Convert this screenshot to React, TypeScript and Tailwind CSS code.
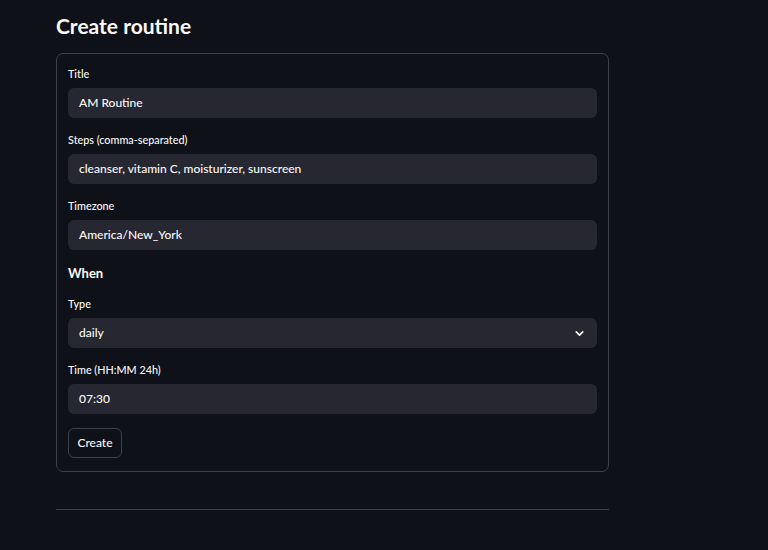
import { ChevronDown } from "lucide-react";

const font = { fontFamily: '"Source Sans Pro", Lato, "Noto Sans", sans-serif' };

function Field({ label, value, select }: { label: string; value: string; select?: boolean }) {
  return (
    <div className="flex flex-col">
      <label className="h-[16px] text-[10.8px] leading-[16px] font-medium text-[#fafafa] mb-[6px]">{label}</label>
      <div className="h-[30px] rounded-[6px] bg-[#262730] flex items-center justify-between pl-[11px] pr-[11px]">
        <span className="text-[12px] font-medium text-[#fafafa]">{value}</span>
        {select && <ChevronDown size={13} strokeWidth={3} className="text-[#fafafa]" />}
      </div>
    </div>
  );
}

export default function App() {
  return (
    <div className="min-h-[550px] h-[550px] overflow-hidden bg-[#0e1117] text-[#fafafa]" style={font}>
      <div className="w-[553px] ml-[56px] pt-[8px]">
        <h1 className="text-[21px] leading-[36px] font-bold mb-[9px]">Create routine</h1>

        <div className="border border-[#3d4045] rounded-[7px] px-[11px] pt-[12px] pb-[13px] flex flex-col gap-[14px]">
          <Field label="Title" value="AM Routine" />
          <Field label="Steps (comma-separated)" value="cleanser, vitamin C, moisturizer, sunscreen" />
          <Field label="Timezone" value="America/New_York" />
          <div className="h-[16px] text-[13px] leading-[16px] font-bold my-[1px]">When</div>
          <Field label="Type" value="daily" select />
          <Field label="Time (HH:MM 24h)" value="07:30" />
          <div>
            <button className="h-[30px] w-[54px] rounded-[6px] border border-[#3d4045] text-[12px] font-medium text-[#fafafa] bg-transparent">
              Create
            </button>
          </div>
        </div>

        <div className="mt-[37px] h-px bg-[#3d4045]" />

        <h2 className="mt-[37px] text-[21px] leading-[36px] font-bold">Routines</h2>
      </div>
    </div>
  );
}
